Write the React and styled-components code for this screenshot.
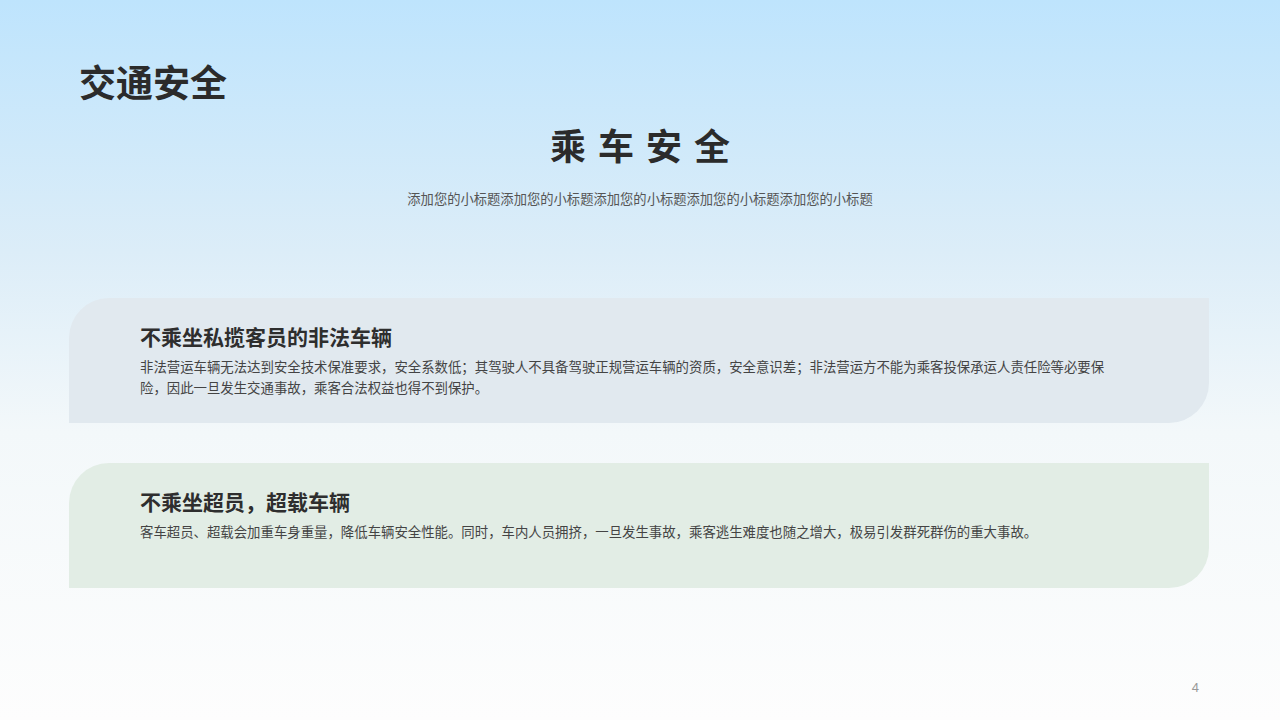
import React from "react";
import styled, { createGlobalStyle } from "styled-components";

const G = createGlobalStyle`
  html,body{margin:0;padding:0;}
  body{font-family:"Noto Sans CJK SC","Noto Sans",sans-serif;}
`;
const Page = styled.div`
  width:1280px;height:720px;position:relative;overflow:hidden;box-sizing:border-box;
  background:linear-gradient(180deg,#bee4fd 0%,#dcedf8 35%,#f3f8fa 60%,#fdfdfd 100%);
  padding:55px 0 0 0;display:flex;flex-direction:column;
`;
const Heading = styled.h1`
  margin:0 0 0 79px;font-size:37px;font-weight:700;color:#2b2b2b;line-height:52px;
`;
const Title = styled.h2`
  margin:12px 0 0;text-align:center;font-size:36px;font-weight:700;color:#2b2b2b;
  letter-spacing:12px;padding-left:12px;line-height:50px;
`;
const Sub = styled.p`
  margin:21px 0 0 0;text-align:center;font-size:13.3px;color:#555;line-height:18px;
`;
const Cards = styled.div`
  display:flex;flex-direction:column;gap:40px;margin:90px 71px 0 69px;
`;
const Card = styled.div`
  height:125px;box-sizing:border-box;background:${p=>p.$bg};
  border-radius:40px 0 40px 0;padding:22px 100px 0 71px;
`;
const CT = styled.h3`margin:0;font-size:21px;font-weight:700;color:#2e2e2e;line-height:32px;`;
const CB = styled.p`margin:4px 0 0;font-size:13.4px;color:#444;line-height:21px;`;
const Num = styled.div`position:absolute;right:81px;bottom:25px;font-size:13px;color:#999;font-family:"Liberation Sans",sans-serif;`;

export default function App(){
  return <Page><G/>
    <Heading>交通安全</Heading>
    <Title>乘车安全</Title>
    <Sub>添加您的小标题添加您的小标题添加您的小标题添加您的小标题添加您的小标题</Sub>
    <Cards>
      <Card $bg="#e1e9ef">
        <CT>不乘坐私揽客员的非法车辆</CT>
        <CB>非法营运车辆无法达到安全技术保准要求，安全系数低；其驾驶人不具备驾驶正规营运车辆的资质，安全意识差；非法营运方不能为乘客投保承运人责任险等必要保险，因此一旦发生交通事故，乘客合法权益也得不到保护。</CB>
      </Card>
      <Card $bg="#e2ede5">
        <CT>不乘坐超员，超载车辆</CT>
        <CB>客车超员、超载会加重车身重量，降低车辆安全性能。同时，车内人员拥挤，一旦发生事故，乘客逃生难度也随之增大，极易引发群死群伤的重大事故。</CB>
      </Card>
    </Cards>
    <Num>4</Num>
  </Page>;
}
